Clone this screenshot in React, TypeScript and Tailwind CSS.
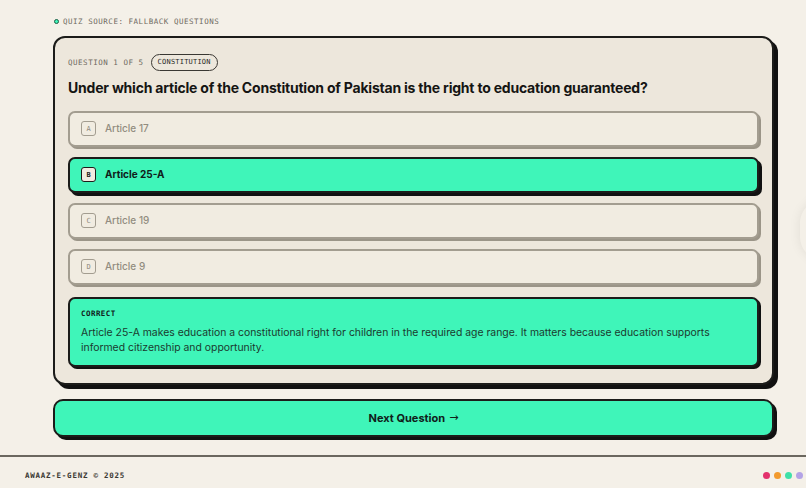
const options = [
  { key: 'A', label: 'Article 17' },
  { key: 'B', label: 'Article 25-A', correct: true },
  { key: 'C', label: 'Article 19' },
  { key: 'D', label: 'Article 9' },
];

const sans = "font-['Inter','Noto_Sans',sans-serif]";
const mono = "font-['DejaVu_Sans_Mono','Liberation_Mono',monospace]";

function OptionRow({ k, label, correct }: { k: string; label: string; correct?: boolean }) {
  return (
    <div
      className={
        correct
          ? 'flex h-[36px] items-center gap-[9px] rounded-[7px] border-2 border-[#1c1c1a] bg-[#3ff5b9] pl-[11px] shadow-[3px_3px_0_#111]'
          : 'flex h-[36px] items-center gap-[9px] rounded-[7px] border-2 border-[#a39d90] bg-[#f1ece1] pl-[11px] shadow-[2px_2px_0_#9b9588]'
      }
    >
      <span
        className={
          correct
            ? `flex h-[15px] w-[15px] items-center justify-center rounded-[3px] border border-[#1c1c1a] bg-[#f1ece1] text-[7px] font-bold text-[#1c1c1a] ${mono}`
            : `flex h-[15px] w-[15px] items-center justify-center rounded-[3px] border border-[#a39d90] text-[7px] text-[#8f897d] ${mono}`
        }
      >
        {k}
      </span>
      <span className={correct ? `text-[10px] font-bold text-[#10201a] ${sans}` : `text-[10px] font-medium text-[#928c80] ${sans}`}>
        {label}
      </span>
    </div>
  );
}

export default function App() {
  return (
    <div className="relative flex h-[488px] w-[806px] flex-col overflow-hidden bg-[#f4f0e8]">
      <main className="flex flex-1 flex-col pl-[53px] pt-[16px]">
        <div className={`flex items-center gap-[4px] pl-[1px] text-[7.5px] tracking-[0.07em] text-[#6f6a61] ${mono}`}>
          <span className="h-[5px] w-[5px] rounded-full border border-[#1d5c44] bg-[#3ff5b9]" />
          QUIZ SOURCE: FALLBACK QUESTIONS
        </div>

        {/* question card */}
        <section className="mt-[9px] w-[721px] rounded-[12px] border-2 border-[#1c1c1a] bg-[#ede7dc] px-[13px] pb-[16px] pt-[16px] shadow-[4px_4px_0_#111]">
          <div className="flex items-center gap-[7px]">
            <span className={`text-[7.5px] tracking-[0.07em] text-[#6f6a61] ${mono}`}>QUESTION 1 OF 5</span>
            <span className={`rounded-full border border-[#3a3833] px-[6px] py-[2px] text-[7px] tracking-[0.03em] text-[#2a2926] ${mono}`}>
              CONSTITUTION
            </span>
          </div>
          <h1 className={`mt-[6px] text-[14px] font-bold tracking-[-0.015em] text-[#151513] ${sans}`}>
            Under which article of the Constitution of Pakistan is the right to education guaranteed?
          </h1>

          <div className="mt-[13px] flex flex-col gap-[10px]">
            {options.map((o) => (
              <OptionRow key={o.key} k={o.key} label={o.label} correct={o.correct} />
            ))}
          </div>

          <div className="mt-[12px] rounded-[7px] border-2 border-[#1c1c1a] bg-[#3ff5b9] px-[11px] pb-[10px] pt-[9px] shadow-[2px_2px_0_#111]">
            <div className={`text-[7.5px] font-bold tracking-[0.06em] text-[#10201a] ${mono}`}>CORRECT</div>
            <p className={`mt-[6px] text-[10.4px] leading-[15px] text-[#1b3a2e] ${sans}`}>
              Article 25-A makes education a constitutional right for children in the required age range. It matters because education supports informed citizenship and opportunity.
            </p>
          </div>
        </section>

        <button className={`mt-[14px] flex h-[38px] w-[721px] items-center justify-center gap-[4px] rounded-[10px] border-2 border-[#1c1c1a] bg-[#3ff5b9] text-[11px] font-bold text-[#10201a] shadow-[3px_3px_0_#111] ${sans}`}>
          Next Question <span className="font-['DejaVu_Sans',sans-serif] font-normal">→</span>
        </button>
      </main>

      <footer className="flex h-[33px] items-center justify-between border-t-2 border-[#6b675f] pl-[25px] pr-[3px] pt-[6px]">
        <span className={`text-[7.5px] font-bold tracking-[0.1em] text-[#3a3833] ${mono}`}>AWAAZ-E-GENZ © 2025</span>
        <div className="flex items-center gap-[4px]">
          <span className="h-[7px] w-[7px] rounded-full bg-[#e3326d]" />
          <span className="h-[7px] w-[7px] rounded-full bg-[#f29a2e]" />
          <span className="h-[7px] w-[7px] rounded-full bg-[#3fe0a8]" />
          <span className="h-[7px] w-[7px] rounded-full bg-[#b3a3e6]" />
        </div>
      </footer>

      <div className="pointer-events-none absolute right-[-40px] top-[200px] h-[60px] w-[46px] rounded-full shadow-[0_0_12px_rgba(0,0,0,0.08)]" />
    </div>
  );
}
